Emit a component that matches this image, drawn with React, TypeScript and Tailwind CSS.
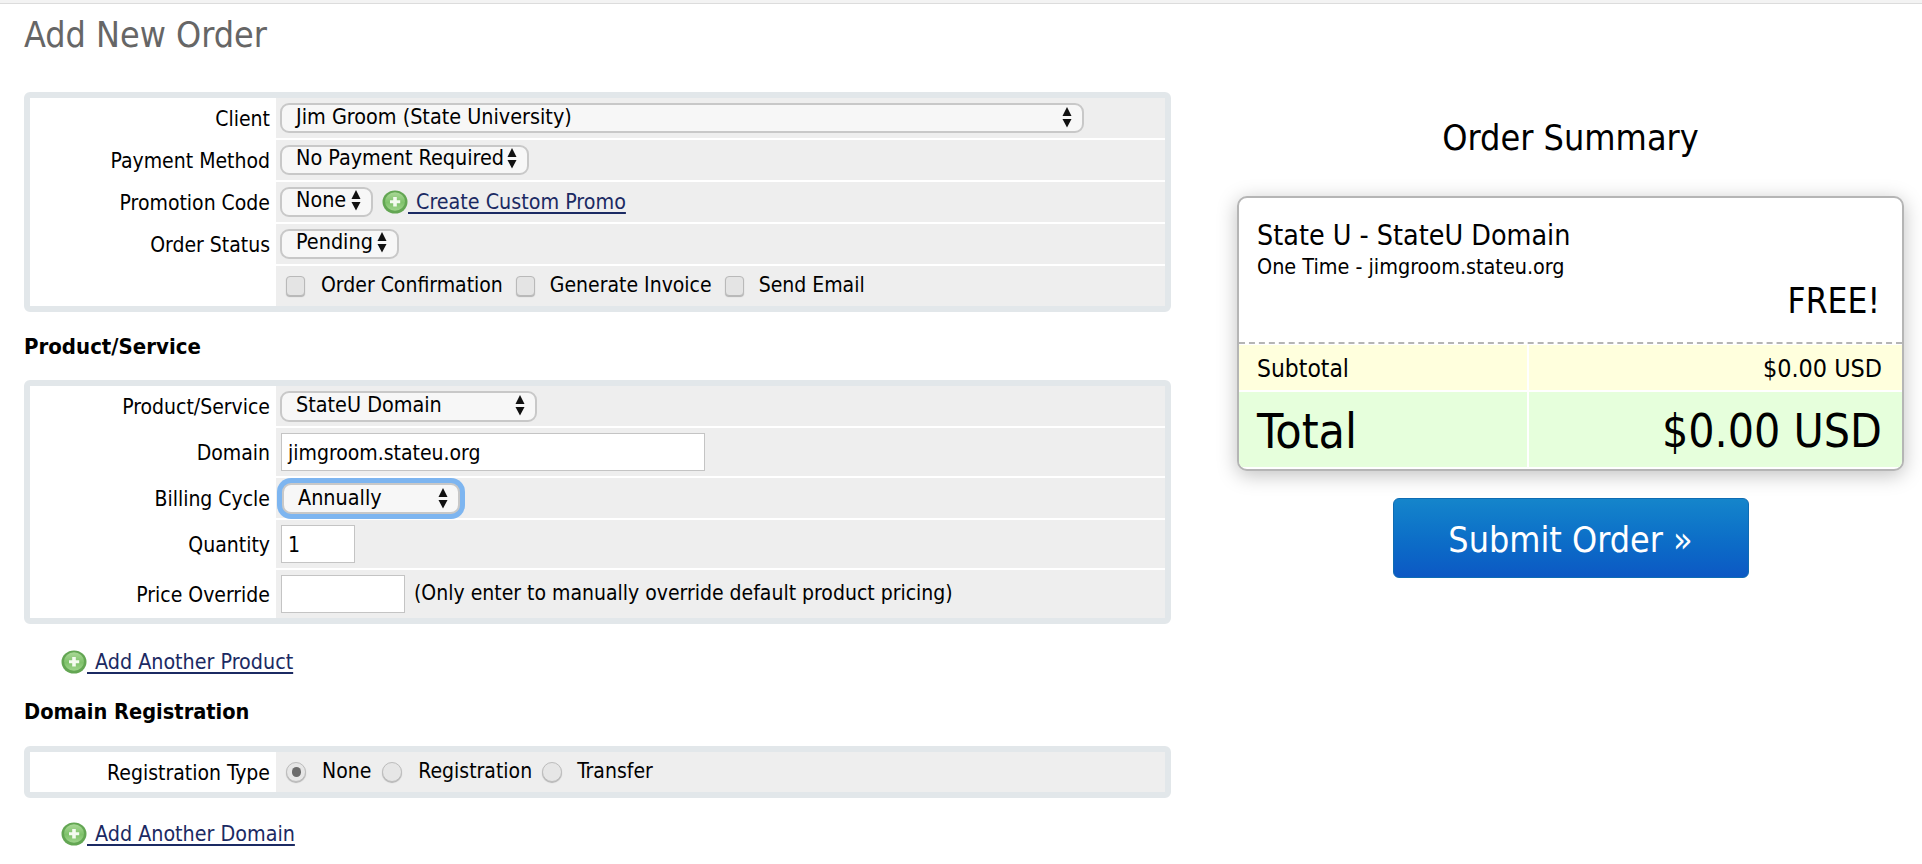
import type { ReactNode } from "react";

function Arrows() {
  return (
    <svg width="10" height="21" viewBox="0 0 10 21" className="shrink-0">
      <path d="M5 0 L9.5 9 L0.5 9 Z" fill="#111" />
      <path d="M0.5 12 L9.5 12 L5 20.5 Z" fill="#111" />
    </svg>
  );
}

function Select({
  label,
  className,
}: {
  label: string;
  className: string;
}) {
  return (
    <div
      className={`flex items-center justify-between pl-[14px] pr-[10px] rounded-[9px] border-2 border-[#c8c8c8] bg-[#f7f7f7] text-[21.4px] text-black whitespace-nowrap ${className}`}
    >
      <span>{label}</span>
      <Arrows />
    </div>
  );
}

function PlusIcon() {
  return (
    <svg width="26" height="24" viewBox="0 0 26 24" className="shrink-0">
      <defs>
        <linearGradient id="plus-fill" x1="0" y1="0" x2="0" y2="1">
          <stop offset="0" stopColor="#a9d896" />
          <stop offset="0.55" stopColor="#7fc26b" />
          <stop offset="1" stopColor="#9ed48b" />
        </linearGradient>
      </defs>
      <ellipse cx="13" cy="12" rx="12.5" ry="11.5" fill="#63a653" />
      <ellipse cx="13" cy="11.5" rx="10" ry="9.2" fill="url(#plus-fill)" />
      <path d="M11.2 7h3.6v3.2h3.4v3h-3.4v3.3h-3.6v-3.3H8v-3h3.2z" fill="#f4fbf0" />
    </svg>
  );
}

function AddLink({ label }: { label: string }) {
  return (
    <a className="flex items-center text-[21.3px] text-[#1b2a63] cursor-pointer">
      <PlusIcon />
      <span className="pb-px underline whitespace-pre decoration-2 underline-offset-[3px]">{" \u200A"}{label}</span>
    </a>
  );
}

function Row({
  label,
  height,
  children,
}: {
  label?: string;
  height: string;
  children: ReactNode;
}) {
  return (
    <div className={`flex ${height}`}>
      <div className="w-[246px] shrink-0 flex items-center justify-end pr-[6px] pt-[3px] text-[21px] text-black whitespace-nowrap">
        {label}
      </div>
      <div className="flex-1 flex items-center pl-[4px] bg-[#eeeeee] text-[21px] text-black whitespace-nowrap">
        {children}
      </div>
    </div>
  );
}

function Panel({ children }: { children: ReactNode }) {
  return (
    <div className="flex flex-col gap-[2px] bg-white border-[6px] border-[#e2e7ea] rounded-[6px]">
      {children}
    </div>
  );
}

function SectionTitle({ className, children }: { className: string; children: ReactNode }) {
  return (
    <h3 className={`mb-[22px] h-6 flex items-center font-bold text-black ${className}`}>
      {children}
    </h3>
  );
}

function Checkbox() {
  return (
    <span className="block w-[19px] h-[20px] shrink-0 rounded-[4px] border border-[#b9b9b9] bg-[#e4e4e4] shadow-[0_1px_1px_rgba(0,0,0,0.25)]" />
  );
}

function Radio({ checked }: { checked?: boolean }) {
  return (
    <span className="flex items-center justify-center w-[20px] h-[20px] shrink-0 rounded-full border border-[#bdbdbd] bg-[#e6e6e6] shadow-[0_1px_1px_rgba(0,0,0,0.25)]">
      {checked && <span className="block w-[9px] h-[10px] rounded-full bg-[#6b6b6b]" />}
    </span>
  );
}

export default function App() {
  return (
    <div className="min-h-screen bg-white font-['DejaVu_Sans_Condensed','Liberation_Sans',sans-serif]">
      <div className="h-1 bg-[#f3f3f3] border-b border-[#dcdcdc]" />
      <div className="flex">
        {/* ORDER FORM */}
        <div className="ml-6 w-[1147px] shrink-0">
          <h1 className="h-[60px] mb-7 pt-px flex items-center text-[35.6px] text-[#666666]">Add New Order</h1>

          <Panel>
            <Row label="Client" height="h-10">
              <Select label="Jim Groom (State University)" className="w-[804px] h-[30px] pb-[2px]" />
            </Row>
            <Row label="Payment Method" height="h-10">
              <Select label="No Payment Required" className="w-[249px] h-[30px] pb-[3px]" />
            </Row>
            <Row label="Promotion Code" height="h-10">
              <Select label="None" className="w-[93px] h-[30px] pb-[3px]" />
              <span className="ml-[9px]">
                <AddLink label="Create Custom Promo" />
              </span>
            </Row>
            <Row label="Order Status" height="h-10">
              <Select label="Pending" className="w-[119px] h-[30px] pb-[3px]" />
            </Row>
            <Row height="h-10">
              <span className="ml-[6px] mr-[16px]"><Checkbox /></span>
              <span>Order Confirmation</span>
              <span className="ml-[13px] mr-[15px]"><Checkbox /></span>
              <span>Generate Invoice</span>
              <span className="ml-[13px] mr-[15px]"><Checkbox /></span>
              <span>Send Email</span>
            </Row>
          </Panel>

          <SectionTitle className="mt-[22px] text-[22px]">Product/Service</SectionTitle>

          <Panel>
            <Row label="Product/Service" height="h-10">
              <Select label="StateU Domain" className="w-[257px] h-[31px] pb-px" />
            </Row>
            <Row label="Domain" height="h-12">
              <div className="ml-px w-[424px] h-[38px] flex items-center pl-[6px] pt-[3px] bg-white border border-[#c4c4c4]">
                jimgroom.stateu.org
              </div>
            </Row>
            <Row label="Billing Cycle" height="h-10">
              <Select
                label="Annually"
                className="ml-[2px] w-[178px] h-[31px] pt-px rounded-[7px] shadow-[0_0_0_5px_#7db5f0]"
              />
            </Row>
            <Row label="Quantity" height="h-12">
              <div className="ml-px w-[74px] h-[38px] flex items-center pl-[6px] pt-[3px] bg-white border border-[#c4c4c4]">
                1
              </div>
            </Row>
            <Row label="Price Override" height="h-12">
              <div className="ml-px w-[124px] h-[38px] bg-white border border-[#c4c4c4]" />
              <span className="ml-[9px]">(Only enter to manually override default product pricing)</span>
            </Row>
          </Panel>

          <div className="mt-[26px] ml-[37px] h-6 flex items-center">
            <AddLink label="Add Another Product" />
          </div>

          <SectionTitle className="mt-[26px] text-[21.6px]">Domain Registration</SectionTitle>

          <Panel>
            <Row label="Registration Type" height="h-10">
              <span className="ml-[6px] mr-[16px]"><Radio checked /></span>
              <span>None</span>
              <span className="ml-[11px] mr-[16px]"><Radio /></span>
              <span>Registration</span>
              <span className="ml-[10px] mr-[15px]"><Radio /></span>
              <span>Transfer</span>
            </Row>
          </Panel>

          <div className="mt-[23px] ml-[37px] h-[26px] flex items-center">
            <AddLink label="Add Another Domain" />
          </div>
        </div>

        {/* ORDER SUMMARY */}
        <div className="ml-[66px] w-[667px] shrink-0 pt-[108px]">
          <h2 className="h-[50px] mb-[34px] pt-px flex items-center justify-center text-[35.7px] text-black">
            Order Summary
          </h2>

          <div className="h-[275px] flex flex-col rounded-[10px] border-2 border-[#b5b5b5] bg-white overflow-hidden shadow-[0_4px_20px_rgba(0,0,0,0.25)]">
            <div className="h-[146px] pt-[23px] pl-[18px] pr-[22px] border-b-2 border-dashed border-[#b5b5b5]">
              <div className="h-[30px] flex items-center text-[28.4px] text-black">State U - StateU Domain</div>
              <div className="mt-[3px] h-[26px] flex items-center text-[21.4px] text-black">One Time - jimgroom.stateu.org</div>
              <div className="mt-px h-10 flex items-center justify-end text-[35px] text-black">FREE!</div>
            </div>
            <div className="flex-1 flex flex-col gap-[2px] pt-px pb-[2px]">
              <div className="h-[45px] grid grid-cols-[288px_1fr] gap-[2px] text-black">
                <div className="flex items-center pl-[18px] pt-[3px] text-[24.4px] bg-[#ffffdd]">Subtotal</div>
                <div className="flex items-center justify-end pr-5 pt-[3px] text-[24.9px] bg-[#ffffdd]">$0.00 USD</div>
              </div>
              <div className="flex-1 grid grid-cols-[288px_1fr] gap-[2px] text-black">
                <div className="flex items-center pl-[18px] pt-[3px] text-[48px] bg-[#e6ffdc]">Total</div>
                <div className="flex items-center justify-end pr-5 pt-[3px] text-[46px] bg-[#e6ffdc]">$0.00 USD</div>
              </div>
            </div>
          </div>

          <button className="block mx-auto mt-[27px] pt-[3px] w-[356px] h-20 rounded-[6px] border border-[#0e6cb3] bg-linear-to-b from-[#1585cb] to-[#0d58c4] text-[35.6px] text-white">
            Submit Order »
          </button>
        </div>
      </div>
    </div>
  );
}
